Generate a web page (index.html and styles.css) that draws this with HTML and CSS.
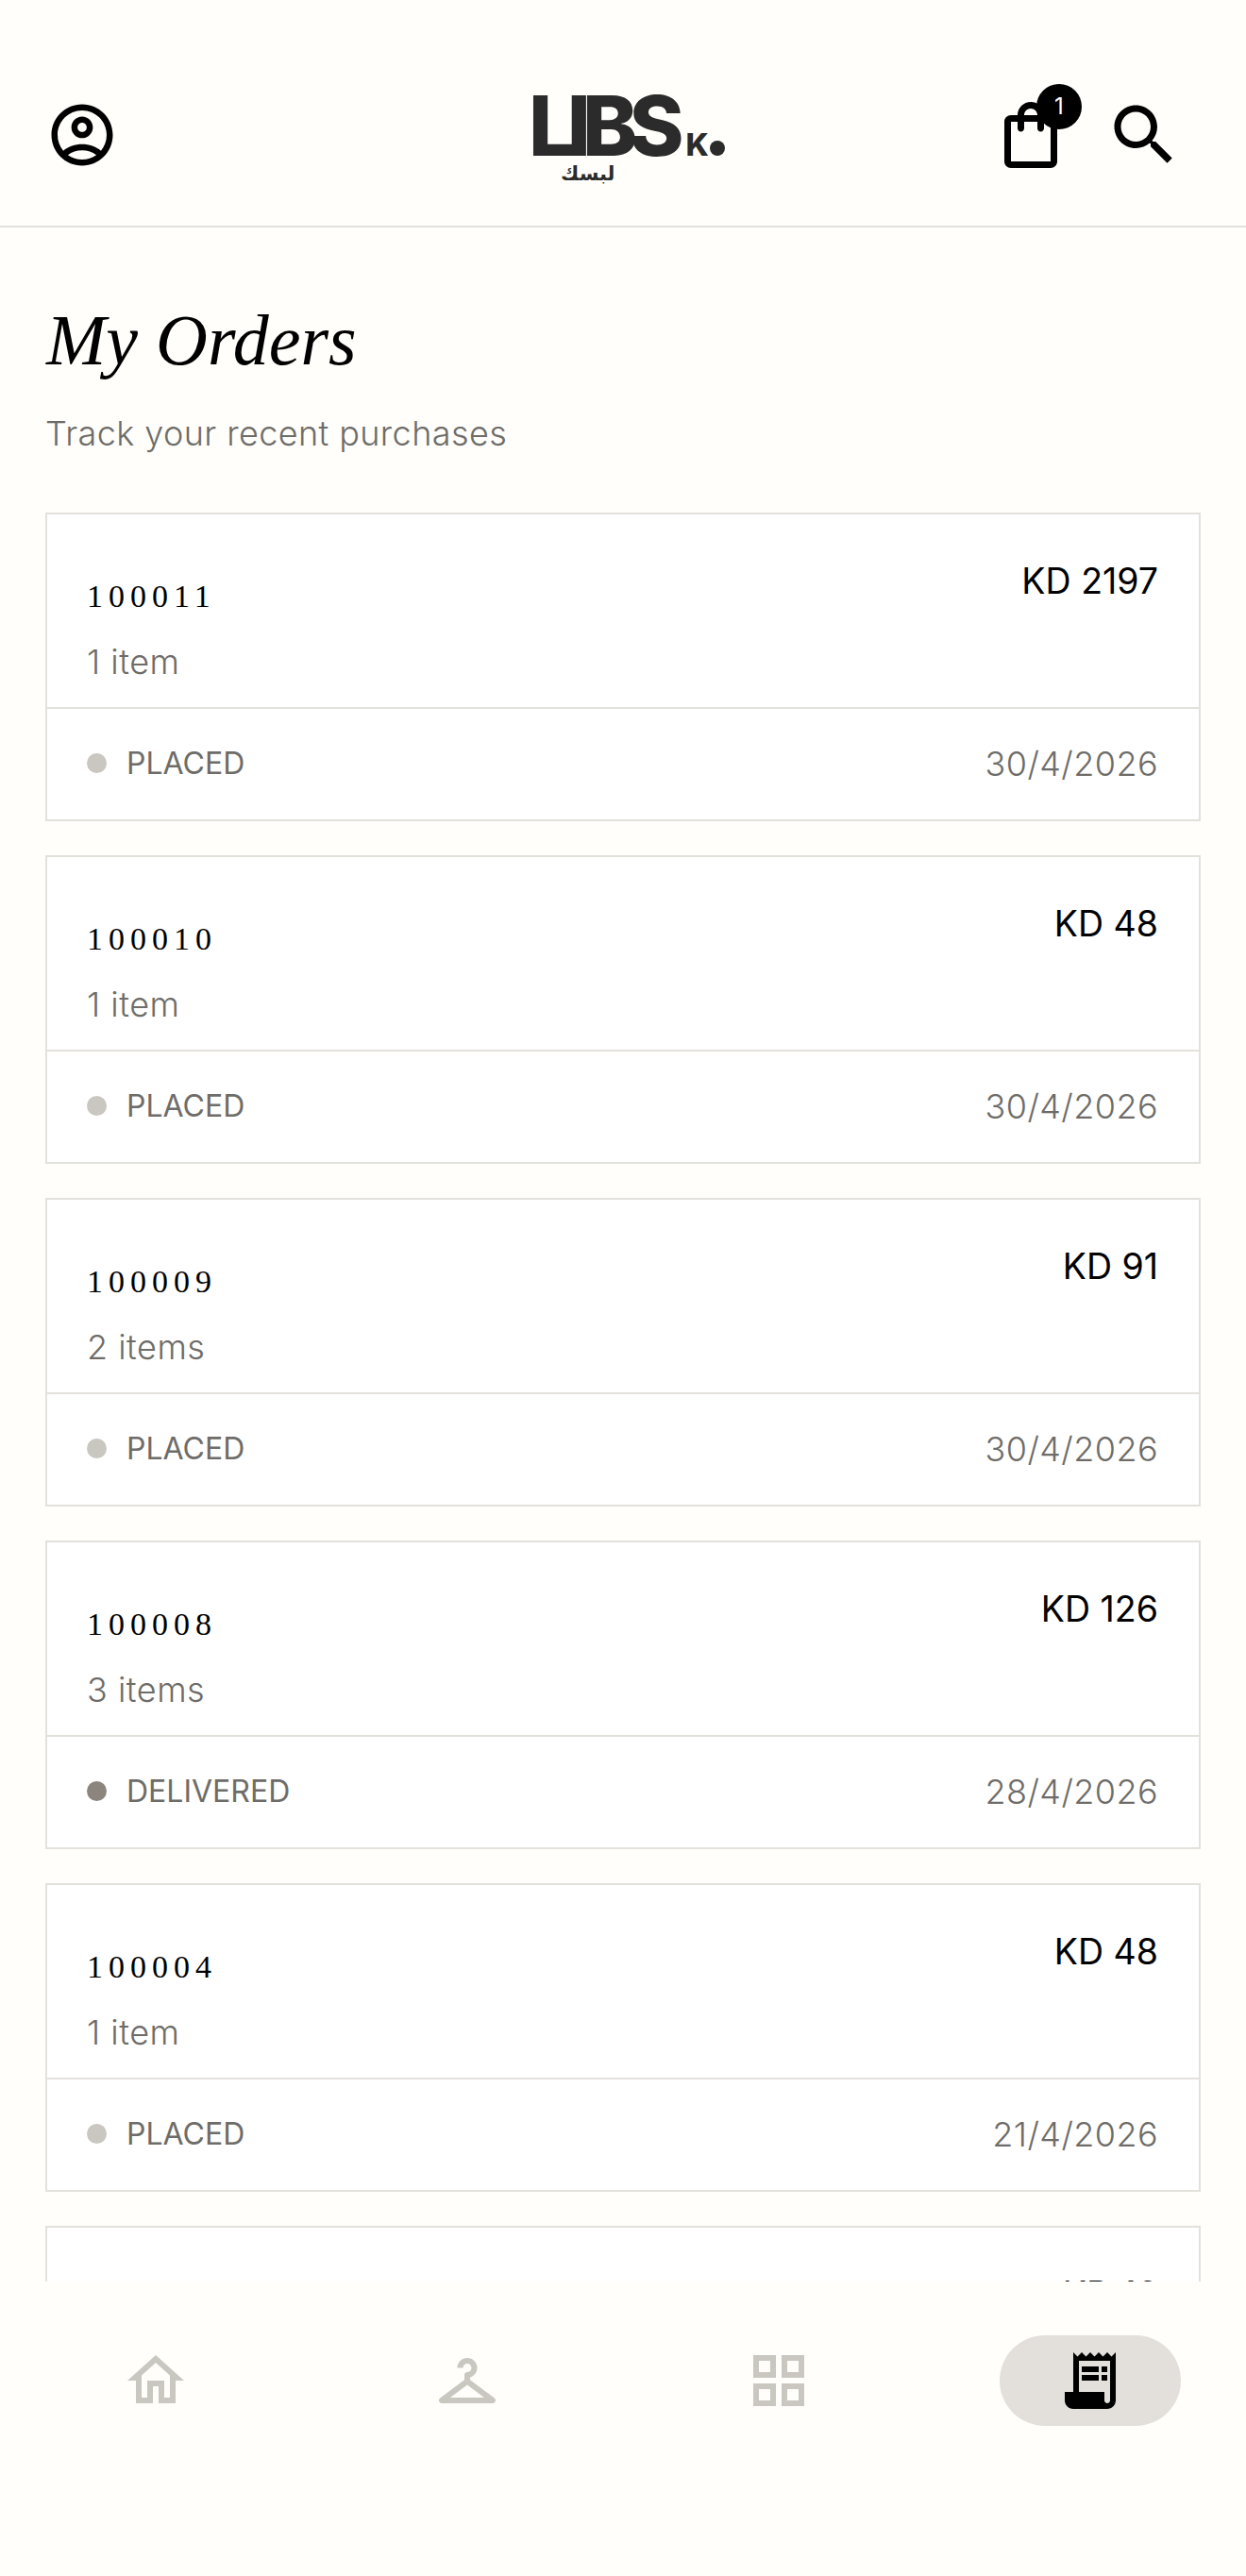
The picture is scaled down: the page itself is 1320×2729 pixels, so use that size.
FILE: index.html
```html
<!DOCTYPE html>
<html lang="en">

<head>
  <meta charset="UTF-8">
  <meta name="viewport" content="width=device-width, initial-scale=1.0">
  <title>My Orders | Libsk</title>
  <link rel="stylesheet" href="styles.css">
</head>

<body>

  <header id="header">
    <a class="account">
      <svg width="78" height="78" viewBox="0 0 24 24"><path d="M12 2C6.48 2 2 6.48 2 12s4.48 10 10 10 10-4.48 10-10S17.52 2 12 2zM7.35 18.5C8.66 17.56 10.26 17 12 17s3.34.56 4.65 1.5c-1.31.94-2.91 1.5-4.65 1.5s-3.34-.56-4.65-1.5zm10.79-1.38C16.45 15.8 14.32 15 12 15s-4.45.8-6.14 2.12C4.7 15.73 4 13.95 4 12c0-4.42 3.58-8 8-8s8 3.58 8 8c0 1.95-.7 3.73-1.86 5.12z"/><path d="M12 6c-1.93 0-3.5 1.57-3.5 3.5S10.07 13 12 13s3.5-1.57 3.5-3.5S13.93 6 12 6zm0 5c-.83 0-1.5-.67-1.5-1.5S11.17 8 12 8s1.5.67 1.5 1.5S12.83 11 12 11z"/></svg>
    </a>
    <div class="logo">
      <div class="logo-row">
        <span class="logo-main">LIBS</span>
        <span class="logo-k">K</span>
        <span class="logo-dot"></span>
      </div>
      <div class="logo-ar" lang="ar">لبسك</div>
    </div>
    <div class="actions">
      <a class="bag">
        <svg width="84" height="84" viewBox="0 0 24 24"><path d="M18 6h-2c0-2.21-1.79-4-4-4S8 3.79 8 6H6c-1.1 0-2 .9-2 2v12c0 1.1.9 2 2 2h12c1.1 0 2-.9 2-2V8c0-1.1-.9-2-2-2zm-6-2c1.1 0 2 .9 2 2h-4c0-1.1.9-2 2-2zm6 16H6V8h2v2c0 .55.45 1 1 1s1-.45 1-1V8h4v2c0 .55.45 1 1 1s1-.45 1-1V8h2v12z"/></svg>
        <span class="badge">1</span>
      </a>
      <a class="search">
        <svg width="84" height="84" viewBox="0 0 24 24"><path d="M15.5 14h-.79l-.28-.27C15.41 12.59 16 11.11 16 9.5 16 5.91 13.09 3 9.5 3S3 5.91 3 9.5 5.91 16 9.5 16c1.61 0 3.09-.59 4.23-1.57l.27.28v.79l5 4.99L20.49 19l-4.99-5zm-6 0C7.01 14 5 11.99 5 9.5S7.01 5 9.5 5 14 7.01 14 9.5 11.99 14 9.5 14z"/></svg>
      </a>
    </div>
  </header>

  <main id="orders">
    <h1 class="title">My Orders</h1>
    <p class="subtitle">Track your recent purchases</p>

    <div class="card">
      <div class="card-top">
        <div>
          <div class="order-id">100011</div>
          <div class="order-items">1 item</div>
        </div>
        <div class="order-price">KD 2197</div>
      </div>
      <div class="card-bottom">
        <div class="status"><span class="dot"></span>PLACED</div>
        <div class="order-date">30/4/2026</div>
      </div>
    </div>

    <div class="card">
      <div class="card-top">
        <div>
          <div class="order-id">100010</div>
          <div class="order-items">1 item</div>
        </div>
        <div class="order-price">KD 48</div>
      </div>
      <div class="card-bottom">
        <div class="status"><span class="dot"></span>PLACED</div>
        <div class="order-date">30/4/2026</div>
      </div>
    </div>

    <div class="card">
      <div class="card-top">
        <div>
          <div class="order-id">100009</div>
          <div class="order-items">2 items</div>
        </div>
        <div class="order-price">KD 91</div>
      </div>
      <div class="card-bottom">
        <div class="status"><span class="dot"></span>PLACED</div>
        <div class="order-date">30/4/2026</div>
      </div>
    </div>

    <div class="card">
      <div class="card-top">
        <div>
          <div class="order-id">100008</div>
          <div class="order-items">3 items</div>
        </div>
        <div class="order-price">KD 126</div>
      </div>
      <div class="card-bottom">
        <div class="status"><span class="dot delivered"></span>DELIVERED</div>
        <div class="order-date">28/4/2026</div>
      </div>
    </div>

    <div class="card">
      <div class="card-top">
        <div>
          <div class="order-id">100004</div>
          <div class="order-items">1 item</div>
        </div>
        <div class="order-price">KD 48</div>
      </div>
      <div class="card-bottom">
        <div class="status"><span class="dot"></span>PLACED</div>
        <div class="order-date">21/4/2026</div>
      </div>
    </div>

    <div class="card">
      <div class="card-top">
        <div class="order-price">KD 16</div>
      </div>
    </div>
  </main>

  <nav id="nav">
    <a class="nav-item">
      <svg width="72" height="72" viewBox="0 0 24 24"><path d="M12 5.69l5 4.5V18h-2v-6H9v6H7v-7.81l5-4.5M12 3L2 12h3v8h6v-6h2v6h6v-8h3L12 3z"/></svg>
    </a>
    <a class="nav-item">
      <svg width="72" height="72" viewBox="0 0 24 24"><path d="M21.6 18.2 13 11.75v-.91c1.65-.49 2.8-2.17 2.43-4.05-.26-1.31-1.3-2.4-2.61-2.7C10.54 3.57 8.5 5.3 8.5 7.5h2c0-.83.67-1.5 1.5-1.5s1.5.67 1.5 1.5c0 .84-.69 1.52-1.53 1.5-.54-.01-.97.45-.97.99v1.76L2.4 18.2c-.77.58-.36 1.8.6 1.8h18c.96 0 1.37-1.22.6-1.8zM6 18l6-4.5 6 4.5H6z"/></svg>
    </a>
    <a class="nav-item">
      <svg width="72" height="72" viewBox="0 0 24 24"><path d="M3 3v8h8V3H3zm6 6H5V5h4v4zm-6 4v8h8v-8H3zm6 6H5v-4h4v4zm4-16v8h8V3h-8zm6 6h-4V5h4v4zm-6 4v8h8v-8h-8zm6 6h-4v-4h4v4z"/></svg>
    </a>
    <a class="nav-item active">
      <svg width="72" height="72" viewBox="0 0 24 24"><path d="M19.5 3.5 18 2l-1.5 1.5L15 2l-1.5 1.5L12 2l-1.5 1.5L9 2 7.5 3.5 6 2v14H3v3c0 1.66 1.34 3 3 3h12c1.66 0 3-1.34 3-3V2l-1.5 1.5zM19 19c0 .55-.45 1-1 1s-1-.45-1-1v-3H8V5h11v14z"/><path d="M9 7h6v2H9zm7 0h2v2h-2zm-7 3h6v2H9zm7 0h2v2h-2z"/></svg>
    </a>
  </nav>

</body>

</html>
```

FILE: styles.css
```css
* {
  box-sizing: border-box;
}

html,
body {
  margin: 0;
  height: 100%;
}

body {
  display: flex;
  flex-direction: column;
  overflow: hidden;
  background-color: #fffefa;
  color: #000;
  font-family: "Inter", "Noto Sans", sans-serif;
}

#header {
  display: grid;
  grid-template-columns: 1fr auto 1fr;
  align-items: center;
  flex: none;
  height: 241px;
  padding: 46px 48px 0;
  border-bottom: 2px solid #e3e1dc;
}

.account {
  display: flex;
}

.logo {
  margin: 11px 0 0 8px;
  color: #2b2b2b;
}

.logo-row {
  display: flex;
  align-items: baseline;
  height: 66px;
}

.logo-main {
  font-size: 88px;
  line-height: 66px;
  font-weight: 800;
  letter-spacing: -9px;
}

.logo-k {
  margin-left: 11px;
  font-size: 33px;
  line-height: 30px;
  font-weight: 800;
}

.logo-dot {
  width: 16px;
  height: 16px;
  margin-left: 1px;
  margin-bottom: 5px;
  border-radius: 50%;
  background-color: #2b2b2b;
}

.logo-ar {
  margin: 6px 0 0 34px;
  width: 46px;
  font-family: "DejaVu Sans", sans-serif;
  font-size: 21px;
  line-height: 24px;
  font-weight: 700;
  text-align: center;
}

.actions {
  display: flex;
  justify-content: flex-end;
  align-items: center;
  gap: 36px;
  margin-right: 18px;
}

.bag,
.search {
  position: relative;
  display: flex;
}

.badge {
  position: absolute;
  top: -12px;
  right: -12px;
  width: 48px;
  height: 48px;
  border-radius: 50%;
  background-color: #000;
  color: #fffefa;
  font-size: 24px;
  line-height: 48px;
  text-align: center;
}

#orders {
  flex: 1;
  min-height: 0;
  overflow: hidden;
  padding: 0 48px;
}

.title {
  margin: 77px 0 0 1px;
  font-family: "Liberation Serif", serif;
  font-size: 76px;
  line-height: 84px;
  font-weight: 400;
  font-style: italic;
}

.subtitle {
  margin: 35px 0 0;
  font-size: 36px;
  line-height: 44px;
  font-weight: 300;
  letter-spacing: .4px;
  color: #6e6c68;
}

.card {
  margin-top: 36px;
  background-color: #fff;
  border: 2px solid #e3e1dc;
}

.subtitle + .card {
  margin-top: 62px;
}

.card-top {
  display: flex;
  justify-content: space-between;
  height: 206px;
  padding: 49px 43px 0 42px;
  border-bottom: 2px solid #e3e1dc;
}

.order-id {
  margin-top: 18px;
  font-family: "Liberation Serif", serif;
  font-size: 34px;
  line-height: 40px;
  letter-spacing: 6px;
}

.order-items {
  margin-top: 27px;
  font-size: 36px;
  line-height: 44px;
  font-weight: 300;
  letter-spacing: .5px;
  color: #6e6c68;
}

.order-price {
  margin-left: auto;
  font-size: 37.5px;
  line-height: 44px;
}

.card-bottom {
  display: flex;
  justify-content: space-between;
  align-items: center;
  height: 117px;
  padding: 0 43px 2px 42px;
}

.status {
  display: flex;
  align-items: center;
  gap: 21px;
  font-size: 32px;
  color: #6e6c68;
}

.dot {
  width: 21px;
  height: 21px;
  border-radius: 50%;
  background-color: #c9c7c0;
}

.dot.delivered {
  background-color: #8c857d;
}

.order-date {
  font-size: 36px;
  font-weight: 300;
  letter-spacing: .4px;
  color: #6e6c68;
}

#nav {
  display: grid;
  grid-template-columns: repeat(4, 1fr);
  flex: none;
  height: 312px;
  padding-top: 57px;
  background-color: #fffefa;
}

.nav-item {
  display: flex;
  justify-content: center;
  align-items: center;
  justify-self: center;
  width: 192px;
  height: 96px;
  border-radius: 48px;
  fill: #c9c7c0;
}

.nav-item.active {
  background-color: #e3e0db;
  fill: #000;
}
```
